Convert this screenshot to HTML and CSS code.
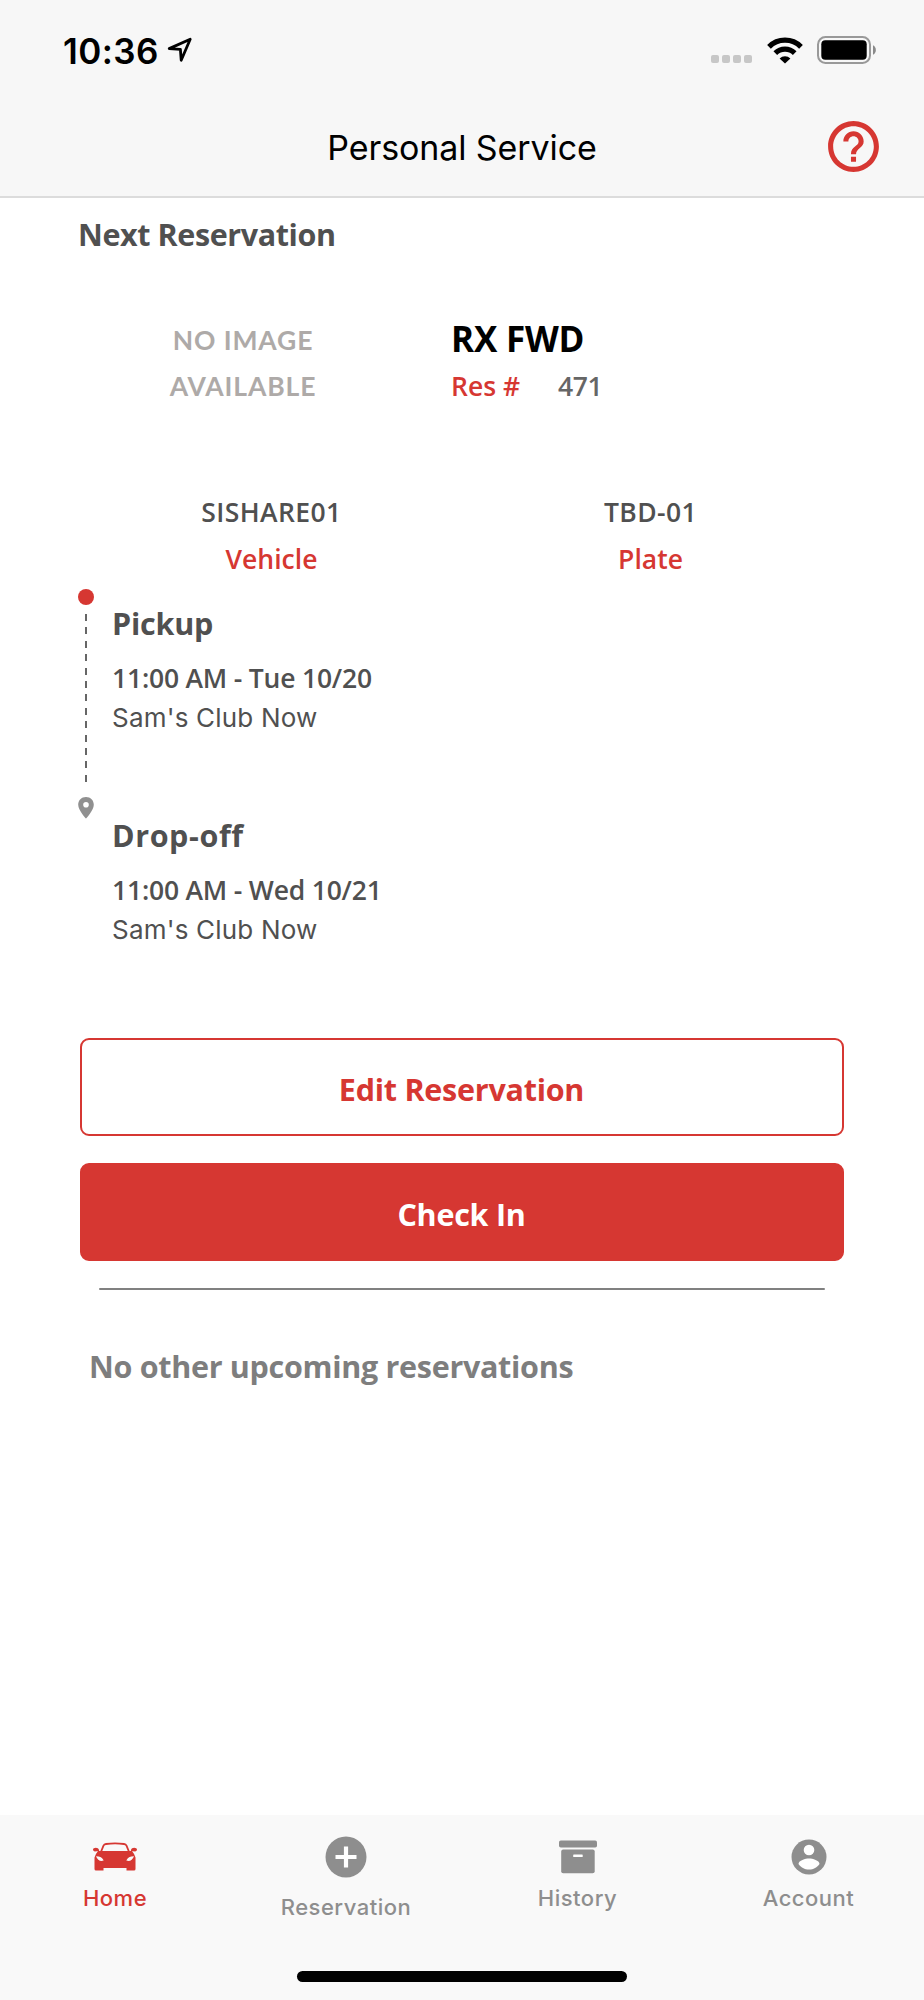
FILE: index.html
```
<!DOCTYPE html>
<html lang="en">
<head>
<meta charset="UTF-8">
<meta name="viewport" content="width=device-width, initial-scale=1.0">
<title>Personal Service</title>
<link rel="stylesheet" href="styles.css">
</head>
<body>
<header class="header">
    <div class="status-bar">
        <span class="time">10:36</span>
        <svg class="location" width="26" height="26" viewBox="0 0 26 26">
            <path d="M2.2 11.6 L23.2 2.2 L14.2 23.2 L13.4 12.4 Z" fill="none" stroke="#000" stroke-width="2.8" stroke-linejoin="round"/>
        </svg>
        <div class="signal"><i></i><i></i><i></i><i></i></div>
        <svg class="wifi" width="36" height="27" viewBox="0 0 36 27">
            <g fill="none" stroke="#000" stroke-width="5.2">
                <path d="M2 9.8 A22.6 22.6 0 0 1 34 9.8"/>
                <path d="M8.3 16.2 A13.8 13.8 0 0 1 27.7 16.2"/>
            </g>
            <path d="M12.6 21.4 A7.8 7.8 0 0 1 23.4 21.4 L18 26.6 Z"/>
        </svg>
        <svg class="battery" width="60" height="28" viewBox="0 0 60 28">
            <rect x="1" y="1" width="52" height="26" rx="7.5" fill="none" stroke="#999" stroke-width="2"/>
            <rect x="4.3" y="4.3" width="45.4" height="19.4" rx="4" fill="#000"/>
            <path d="M56 9.2 C59.8 11 59.8 17 56 18.8 Z" fill="#8a8a8a"/>
        </svg>
    </div>
    <div class="title-bar">
        <h1>Personal Service</h1>
        <svg class="help" width="61" height="61" viewBox="0 0 24 24" fill="#d63732">
            <path d="M11 18h2v-2h-2v2zm1-16C6.48 2 2 6.48 2 12s4.480 10 10 10 10-4.480 10-10S17.520 2 12 2zm0 18c-4.410 0-8-3.590-8-8s3.590-8 8-8 8 3.590 8 8-3.590 8-8 8zm0-14c-2.210 0-4 1.790-4 4h2c0-1.100.9-2 2-2s2 .9 2 2c0 2-3 1.750-3 5h2c0-2.250 3-2.500 3-5 0-2.210-1.790-4-4-4z"/>
        </svg>
    </div>
</header>

<main class="content">
    <h2 class="section-title">Next Reservation</h2>

    <div class="car">
        <div class="no-image">
            <div>NO IMAGE</div>
            <div>AVAILABLE</div>
        </div>
        <div class="car-info">
            <div class="car-name">RX FWD</div>
            <div class="car-res"><span class="red">Res #</span><span class="res-number">471</span></div>
        </div>
    </div>

    <div class="ids">
        <div>
            <div class="id-value">SISHARE01</div>
            <div class="red">Vehicle</div>
        </div>
        <div>
            <div class="id-value">TBD-01</div>
            <div class="red">Plate</div>
        </div>
    </div>

    <div class="trip">
        <div class="stop pickup">
            <div class="rail">
                <span class="dot"></span>
                <span class="dashes"></span>
            </div>
            <div class="stop-info">
                <h3>Pickup</h3>
                <p class="date">11:00 AM - Tue 10/20</p>
                <p class="place">Sam's Club Now</p>
            </div>
        </div>
        <div class="stop dropoff">
            <div class="rail">
                <svg width="16" height="22" viewBox="0 0 16 22">
                    <path fill="#909090" fill-rule="evenodd" d="M8 0 C3.500 0 .2 3.400 .2 7.700 C.2 13.300 8 21.500 8 21.500 S15.800 13.300 15.800 7.700 C15.800 3.400 12.500 0 8 0 Z M8 4.900 A2.800 2.800 0 1 1 8 10.500 A2.800 2.800 0 1 1 8 4.900 Z"/>
                </svg>
            </div>
            <div class="stop-info">
                <h3>Drop-off</h3>
                <p class="date">11:00 AM - Wed 10/21</p>
                <p class="place">Sam's Club Now</p>
            </div>
        </div>
    </div>

    <div class="actions">
        <button class="btn btn-outline">Edit Reservation</button>
        <button class="btn btn-fill">Check In</button>
    </div>

    <hr class="divider">
    <p class="empty">No other upcoming reservations</p>
</main>

<nav class="tabs">
    <a class="tab active">
        <svg width="46" height="42" viewBox="0 0 46 42">
            <path fill="none" stroke="#d63732" stroke-width="1.8" d="M8.500 17 L11.500 9.600 Q12.200 8.200 14 8 Q23 6.800 32 8 Q33.800 8.200 34.500 9.600 L37.500 17"/>
            <g fill="#d63732">
                <path d="M1 13.800 C1 11.300 6.500 11 7 14 L7.200 15 L2.800 15.400 Q1 15.200 1 13.800 Z"/>
                <path d="M45 13.800 C45 11.300 39.500 11 39 14 L38.800 15 L43.200 15.400 Q45 15.200 45 13.800 Z"/>
                <path d="M6 15 H40 Q42.500 18 43.500 21.500 V33 Q43.500 34.500 42 34.500 H34.500 V32 H11.500 V34.500 H4 Q2.500 34.500 2.500 33 V21.500 Q3.500 18 6 15 Z"/>
            </g>
            <path fill="#f9f9f9" d="M4 20.200 Q10 20.300 11.700 24.500 Q6.500 26.300 4 20.200 Z M42 20.200 Q36 20.300 34.300 24.500 Q39.500 26.300 42 20.200 Z"/>
        </svg>
        <span>Home</span>
    </a>
    <a class="tab tab-big">
        <svg width="42" height="42" viewBox="0 0 42 42">
            <circle cx="21" cy="21" r="20.500" fill="#8e8e8e"/>
            <path d="M21 10.500V31.500M10.500 21H31.500" stroke="#fff" stroke-width="4.200"/>
        </svg>
        <span>Reservation</span>
    </a>
    <a class="tab">
        <svg width="38" height="42" viewBox="0 0 38 42">
            <rect x="0" y="4.500" width="38" height="7" rx="1.800" fill="#8e8e8e"/>
            <rect x="2.200" y="13.600" width="33.500" height="23.700" rx="2" fill="#8e8e8e"/>
            <rect x="14.200" y="18.500" width="9.500" height="2.600" rx=".6" fill="#fff"/>
        </svg>
        <span>History</span>
    </a>
    <a class="tab">
        <svg width="42" height="42" viewBox="0 0 24 24">
            <circle cx="12" cy="12" r="10" fill="#8e8e8e"/>
            <circle cx="12" cy="8" r="3.050" fill="#fff"/>
            <path fill="#fff" d="M6 15.980 C6.030 13.990 10 12.900 12 12.900 S17.970 13.990 18 15.980 C16.710 17.920 14.500 19.200 12 19.200 S7.290 17.920 6 15.980 Z"/>
        </svg>
        <span>Account</span>
    </a>
    <div class="home-indicator"></div>
</nav>
</body>
</html>
```
FILE: styles.css
```
* {
    box-sizing: border-box;
}

body {
    margin: 0;
    height: 2000px;
    display: flex;
    flex-direction: column;
    background-color: #fff;
    color: #505050;
    font-family: "Open Sans", sans-serif;
    font-size: 26.5px;
    font-weight: 600;
    line-height: 40px;
}

h1, h2, h3, p {
    margin: 0;
}

svg {
    display: block;
    flex: none;
}

.red {
    color: #d63732;
}

/* header */
.header {
    height: 198px;
    background-color: #f7f7f7;
    border-bottom: 2px solid #dcdcdc;
    font-family: Inter, sans-serif;
    color: #000;
}

.status-bar {
    height: 100px;
    display: flex;
    align-items: center;
    padding: 0 47px 0 63px;
}

.time {
    width: 104px;
    font-size: 35px;
    font-weight: 600;
    letter-spacing: 0.4px;
    padding-top: 1px;
}

.signal {
    display: flex;
    gap: 3px;
    margin: 18px 15px 0 auto;
}

.signal i {
    width: 8px;
    height: 8px;
    border-radius: 2px;
    background-color: #c7c7c7;
}

.battery {
    margin-left: 14px;
}

.title-bar {
    height: 96px;
    display: grid;
    grid-template-columns: 1fr auto 1fr;
    align-items: center;
    padding: 0 40px;
}

.title-bar h1 {
    grid-column: 2;
    font-size: 34px;
    font-weight: 400;
    letter-spacing: -0.1px;
}

.help {
    justify-self: end;
    margin-top: -3px;
}

/* reservation */
.content {
    flex: 1;
    padding: 16px 80px 0 79px;
}

.section-title {
    margin-left: -1px;
    font-size: 30.5px;
    font-weight: 700;
    letter-spacing: -0.4px;
}

.car {
    display: flex;
    margin-top: 65px;
}

.no-image {
    width: 328px;
    margin-right: 44px;
    padding-top: 1px;
    color: #aeaaa8;
    text-align: center;
    font-family: Lato, sans-serif;
    font-weight: 700;
    letter-spacing: 0.9px;
    display: grid;
    gap: 6px;
}

.car-info {
    display: grid;
    gap: 7px;
}

.car-name {
    font-size: 35px;
    font-weight: 700;
    letter-spacing: -0.2px;
    color: #000;
}

.res-number {
    margin-left: 38px;
    letter-spacing: -0.5px;
    color: #666;
}

.ids {
    display: grid;
    grid-template-columns: 379px 379px;
    margin: 86px 0 0 3px;
    text-align: center;
}

.ids > div {
    display: grid;
    gap: 7px;
}

.id-value {
    letter-spacing: 0.4px;
}

/* pickup / drop-off */
.trip {
    margin-top: 10px;
}

.stop {
    display: flex;
    gap: 18px;
    margin-left: -1px;
}

.pickup {
    height: 208px;
}

.dropoff {
    height: 241px;
}

.rail {
    width: 16px;
    display: flex;
    flex-direction: column;
    align-items: center;
}

.dot {
    width: 16px;
    height: 16px;
    border-radius: 50%;
    background-color: #d63732;
}

.dashes {
    width: 2px;
    height: 168px;
    margin-top: 9px;
    background: repeating-linear-gradient(#666 0 7px, transparent 7px 13.4px);
}

.stop-info {
    padding-top: 14px;
}

.dropoff .stop-info {
    padding-top: 18px;
}

.stop-info h3 {
    font-size: 30.5px;
    font-weight: 700;
    letter-spacing: -0.2px;
    margin-bottom: 15px;
}

.dropoff h3 {
    letter-spacing: 0.6px;
}

.date {
    letter-spacing: -0.2px;
}

.place {
    font-family: Inter, sans-serif;
    font-size: 26px;
    font-weight: 400;
    letter-spacing: 0.2px;
}

/* buttons */
.actions {
    display: grid;
    gap: 27px;
    margin-left: 1px;
}

.btn {
    height: 98px;
    padding: 4px 1px 0 0;
    border: 2px solid #d63732;
    border-radius: 9px;
    font: 700 30.5px "Open Sans", sans-serif;
    letter-spacing: -0.25px;
}

.btn-outline {
    background-color: #fff;
    color: #d63732;
}

.btn-fill {
    background-color: #d63732;
    color: #fff;
}

.divider {
    height: 2px;
    margin: 27px 19px 56px 20px;
    border: none;
    border-radius: 1px;
    background-color: #808080;
}

.empty {
    margin-left: 10px;
    font-size: 30.5px;
    font-weight: 700;
    letter-spacing: -0.3px;
    color: #7e7e7e;
}

/* bottom tabs */
.tabs {
    position: relative;
    height: 185px;
    display: grid;
    grid-template-columns: repeat(4, 1fr);
    background-color: #f9f9f9;
    font-family: Inter, sans-serif;
    font-size: 22px;
    font-weight: 500;
    color: #8e8e8e;
}

.tab {
    display: flex;
    flex-direction: column;
    align-items: center;
    padding-top: 21px;
}

.tab span {
    letter-spacing: 0.5px;
}

.tab-big {
    gap: 9px;
    padding-right: 1px;
}

.active {
    padding-right: 1px;
    color: #d63732;
}

.home-indicator {
    position: absolute;
    left: 297px;
    bottom: 18px;
    width: 330px;
    height: 11px;
    border-radius: 6px;
    background-color: #000;
}
```
